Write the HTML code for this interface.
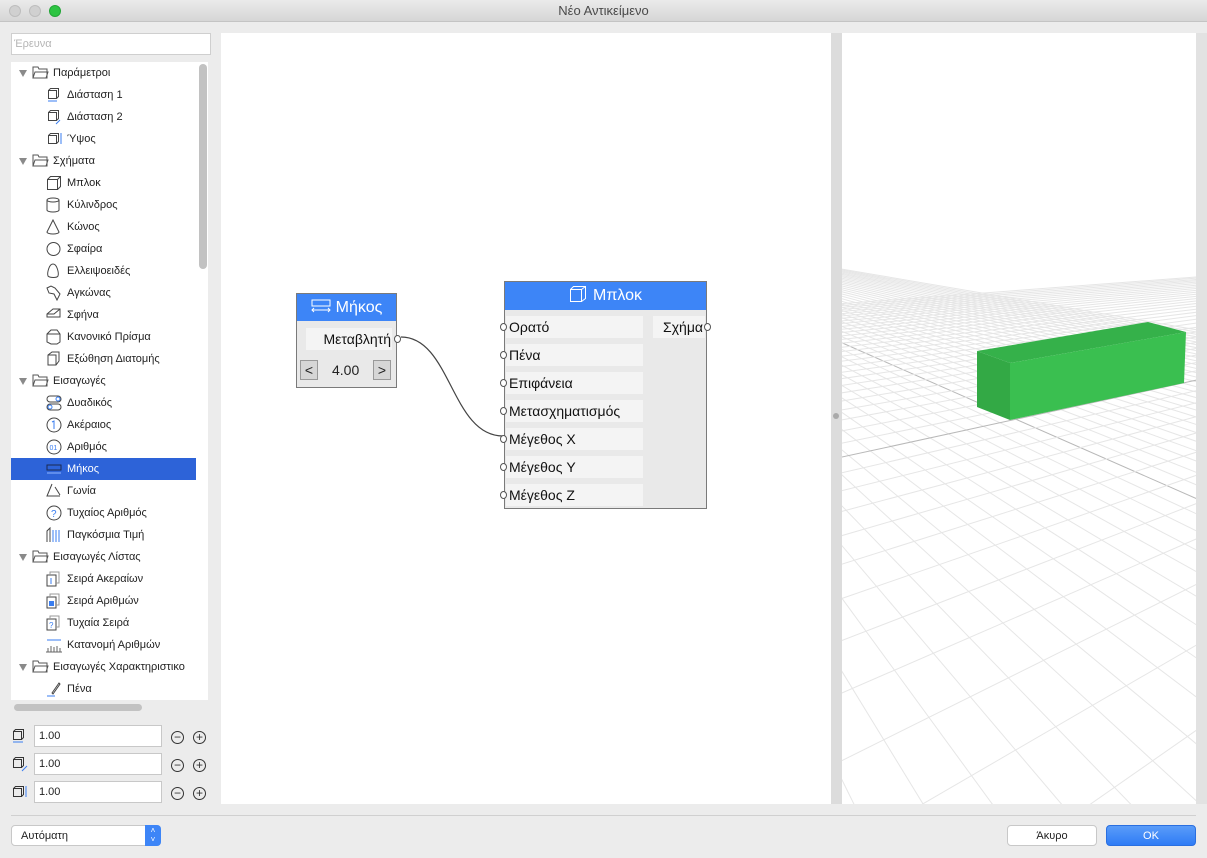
<!DOCTYPE html>
<html style="overflow:hidden"><head><meta charset="utf-8">
<style>
*{box-sizing:border-box;margin:0;padding:0}
body{width:1207px;height:858px;overflow:hidden;background:#ececec;font-family:"Liberation Sans","DejaVu Sans",sans-serif;position:relative;color:#222}
.abs{position:absolute}
#title{left:0;top:0;width:1207px;height:22px;background:linear-gradient(#ebebeb,#d6d6d6);border-bottom:1px solid #c4c4c4;text-align:center;font-size:13px;line-height:22px;color:#4a4a4a}
.dot{width:12px;height:12px;border-radius:50%;top:5px;background:#d0d0d0;border:1px solid #bdbdbd}
#search{left:11px;top:33px;width:200px;height:22px;background:#fff;border:1px solid #cfcfcf;font-size:11px;color:#b5b5b5;padding:4px 2px}
#tree{left:11px;top:62px;width:197px;height:638px;background:#fff;overflow:hidden}
.row{position:absolute;left:0;width:185px;height:22px;font-size:11px;line-height:22px;white-space:nowrap}
.row.l0 span{position:absolute;left:42px}
.row.l1 span{position:absolute;left:56px}
.row svg{position:absolute;top:3px}
.row.sel{background:#2d63d8;color:#fff}
.tri{position:absolute;left:8px;top:8px;width:0;height:0;border-left:4px solid transparent;border-right:4px solid transparent;border-top:7px solid #8a8a8a}
#vs{left:199px;top:64px;width:8px;height:205px;background:#c2c2c2;border-radius:4px}
#hs{left:14px;top:704px;width:128px;height:7px;background:#c2c2c2;border-radius:4px}
.inp{left:34px;width:128px;height:22px;background:#fff;border:1px solid #c8c8c8;font-size:11px;line-height:20px;padding-left:4px}
.pm{width:13px;height:13px;border:1px solid #333;border-radius:50%;font-size:12px;line-height:10px;text-align:center;color:#333}
#canvas{left:221px;top:33px;width:610px;height:771px;background:#fff;overflow:hidden}
#split{left:831px;top:33px;width:11px;height:771px;background:#dcdcdc}
#view{left:842px;top:33px;width:354px;height:771px;background:#fff;overflow:hidden}
.node{position:absolute;background:#e9e9e9;border:1px solid #7a7a7a}
.hdr{background:#3d85f7;color:#fff;font-size:16px;text-align:center}
.port{position:absolute;background:#f4f4f4;font-size:14px;height:22px;line-height:22px;color:#111}
.pin{position:absolute;width:7px;height:8px;border:1px solid #555;border-radius:50%;background:#fff}
.btn{height:21px;border-radius:4px;font-size:11px;text-align:center;line-height:20px}
</style></head><body>
<div id="title" class="abs">Νέο Αντικείμενο</div>
<div class="abs dot" style="left:9px"></div>
<div class="abs dot" style="left:29px"></div>
<div class="abs dot" style="left:49px;background:#2dc442;border-color:#22a636"></div>
<div id="search" class="abs">Έρευνα</div>
<div id="tree" class="abs">
<div class="row l0" style="top:0"><i class="tri"></i><svg width="17" height="14" style="left:21px"><path d="M1 2h5l1 2h8v9H1z M3 7h13l-2 6H1z" fill="none" stroke="#555"/></svg><span>Παράμετροι</span></div>
<div class="row l1" style="top:22px"><svg width="14" height="16" style="left:36px"><rect x="1.5" y="3.5" width="8" height="8" fill="none" stroke="#444"/><path d="M1.5 3.5l2-2h8v8l-2 2" fill="none" stroke="#444"/><path d="M1 14h9" stroke="#3a7ef0"/></svg><span>Διάσταση 1</span></div>
<div class="row l1" style="top:44px"><svg width="14" height="16" style="left:36px"><rect x="1.5" y="3.5" width="8" height="8" fill="none" stroke="#444"/><path d="M1.5 3.5l2-2h8v8l-2 2" fill="none" stroke="#444"/><path d="M9 15l4-4" stroke="#3a7ef0"/></svg><span>Διάσταση 2</span></div>
<div class="row l1" style="top:66px"><svg width="16" height="16" style="left:36px"><rect x="1.5" y="4.5" width="8" height="8" fill="none" stroke="#444"/><path d="M1.5 4.5l2-2h8v8l-2 2" fill="none" stroke="#444"/><path d="M14 2v11" stroke="#3a7ef0"/></svg><span>Ύψος</span></div>
<div class="row l0" style="top:88px"><i class="tri"></i><svg width="17" height="14" style="left:21px"><path d="M1 2h5l1 2h8v9H1z M3 7h13l-2 6H1z" fill="none" stroke="#555"/></svg><span>Σχήματα</span></div>
<div class="row l1" style="top:110px"><svg width="16" height="16" style="left:35px"><rect x="1.5" y="4.5" width="10" height="10" fill="none" stroke="#444"/><path d="M1.5 4.5l3-3h10v10l-3 3M11.5 4.5l3-3" fill="none" stroke="#444"/></svg><span>Μπλοκ</span></div>
<div class="row l1" style="top:132px"><svg width="16" height="16" style="left:35px"><ellipse cx="7" cy="3" rx="6" ry="2" fill="none" stroke="#444"/><path d="M1 3v10a6 2 0 0 0 12 0V3" fill="none" stroke="#444"/></svg><span>Κύλινδρος</span></div>
<div class="row l1" style="top:154px"><svg width="16" height="16" style="left:35px"><path d="M7 1L1 13a6 2 0 0 0 12 0z" fill="none" stroke="#444"/></svg><span>Κώνος</span></div>
<div class="row l1" style="top:176px"><svg width="16" height="16" style="left:35px"><circle cx="7.5" cy="8" r="6.5" fill="none" stroke="#444"/></svg><span>Σφαίρα</span></div>
<div class="row l1" style="top:198px"><svg width="16" height="16" style="left:35px"><path d="M7 1C3 1 1 10 2 13c2 2 9 2 10 0 1-3-1-12-5-12z" fill="none" stroke="#444"/></svg><span>Ελλειψοειδές</span></div>
<div class="row l1" style="top:220px"><svg width="16" height="16" style="left:35px"><path d="M1 3l4-2 4 2 5 6-3 6-3-6-5-1z" fill="none" stroke="#444"/></svg><span>Αγκώνας</span></div>
<div class="row l1" style="top:242px"><svg width="16" height="16" style="left:35px"><path d="M1 7l6-5h7v8H1zM1 7h7l6-5" fill="none" stroke="#444"/></svg><span>Σφήνα</span></div>
<div class="row l1" style="top:264px"><svg width="16" height="16" style="left:35px"><path d="M1 5l4-4h6l3 4v8l-3 2H5l-4-2z M1 5h13" fill="none" stroke="#444"/></svg><span>Κανονικό Πρίσμα</span></div>
<div class="row l1" style="top:286px"><svg width="16" height="16" style="left:35px"><path d="M2 4l4-3h7v9l-3 4H2zM2 4h8v10" fill="none" stroke="#444"/></svg><span>Εξώθηση Διατομής</span></div>
<div class="row l0" style="top:308px"><i class="tri"></i><svg width="17" height="14" style="left:21px"><path d="M1 2h5l1 2h8v9H1z M3 7h13l-2 6H1z" fill="none" stroke="#555"/></svg><span>Εισαγωγές</span></div>
<div class="row l1" style="top:330px"><svg width="16" height="16" style="left:35px"><rect x="1" y="1" width="14" height="6" rx="3" fill="none" stroke="#444"/><rect x="1" y="9" width="14" height="6" rx="3" fill="none" stroke="#444"/><circle cx="12" cy="4" r="2" fill="none" stroke="#3a7ef0"/><circle cx="4" cy="12" r="2" fill="none" stroke="#3a7ef0"/></svg><span>Δυαδικός</span></div>
<div class="row l1" style="top:352px"><svg width="16" height="16" style="left:35px"><circle cx="8" cy="8" r="7" fill="none" stroke="#444"/><path d="M6 5l2-1v8" fill="none" stroke="#3a7ef0"/></svg><span>Ακέραιος</span></div>
<div class="row l1" style="top:374px"><svg width="16" height="16" style="left:35px"><circle cx="8" cy="8" r="7" fill="none" stroke="#444"/><text x="3.5" y="11" font-size="7" fill="#3a7ef0" font-family="Liberation Sans">01</text></svg><span>Αριθμός</span></div>
<div class="row l1 sel" style="top:396px;width:185px"><svg width="16" height="16" style="left:35px"><rect x="1" y="4" width="14" height="5" fill="none" stroke="#1a2a50"/><path d="M1 12h14" stroke="#8fb6ff"/></svg><span>Μήκος</span></div>
<div class="row l1" style="top:418px"><svg width="16" height="16" style="left:35px"><path d="M6 1L1 13h13M9 4l5 8" fill="none" stroke="#444"/></svg><span>Γωνία</span></div>
<div class="row l1" style="top:440px"><svg width="16" height="16" style="left:35px"><circle cx="8" cy="8" r="7" fill="none" stroke="#444"/><text x="5" y="12" font-size="10" fill="#3a7ef0" font-family="Liberation Sans">?</text></svg><span>Τυχαίος Αριθμός</span></div>
<div class="row l1" style="top:462px"><svg width="16" height="16" style="left:35px"><path d="M7 3v12M10 3v12M13 3v12" fill="none" stroke="#3a7ef0"/><path d="M1 15V4l3-3v14" fill="none" stroke="#444"/></svg><span>Παγκόσμια Τιμή</span></div>
<div class="row l0" style="top:484px"><i class="tri"></i><svg width="17" height="14" style="left:21px"><path d="M1 2h5l1 2h8v9H1z M3 7h13l-2 6H1z" fill="none" stroke="#555"/></svg><span>Εισαγωγές Λίστας</span></div>
<div class="row l1" style="top:506px"><svg width="16" height="16" style="left:35px"><rect x="1" y="4" width="9" height="11" fill="none" stroke="#444"/><path d="M4 4V1h9v11h-3" fill="none" stroke="#999"/><path d="M5 7v6" stroke="#3a7ef0"/></svg><span>Σειρά Ακεραίων</span></div>
<div class="row l1" style="top:528px"><svg width="16" height="16" style="left:35px"><rect x="1" y="4" width="9" height="11" fill="none" stroke="#444"/><path d="M4 4V1h9v11h-3" fill="none" stroke="#999"/><rect x="3" y="8" width="5" height="5" fill="#3a7ef0"/></svg><span>Σειρά Αριθμών</span></div>
<div class="row l1" style="top:550px"><svg width="16" height="16" style="left:35px"><rect x="1" y="4" width="9" height="11" fill="none" stroke="#444"/><path d="M4 4V1h9v11h-3" fill="none" stroke="#999"/><text x="3" y="13" font-size="8" fill="#3a7ef0">?</text></svg><span>Τυχαία Σειρά</span></div>
<div class="row l1" style="top:572px"><svg width="18" height="16" style="left:34px"><path d="M2 3h14" stroke="#3a7ef0"/><path d="M1 15h16M3 15v-4M6 15v-6M9 15v-5M12 15v-6M15 15v-4" stroke="#666"/></svg><span>Κατανομή Αριθμών</span></div>
<div class="row l0" style="top:594px;width:190px"><i class="tri"></i><svg width="17" height="14" style="left:21px"><path d="M1 2h5l1 2h8v9H1z M3 7h13l-2 6H1z" fill="none" stroke="#555"/></svg><span>Εισαγωγές Χαρακτηριστικο</span></div>
<div class="row l1" style="top:616px"><svg width="16" height="16" style="left:35px"><path d="M6 12L13 2l1 1-7 10z" fill="none" stroke="#444"/><path d="M1 15h8" stroke="#3a7ef0"/></svg><span>Πένα</span></div>
</div>
<div id="vs" class="abs"></div>
<div id="hs" class="abs"></div>

<svg class="abs" style="left:12px;top:728px" width="16" height="16"><rect x="1.5" y="3.5" width="8" height="8" fill="none" stroke="#333"/><path d="M1.5 3.5l2-2h8v8l-2 2" fill="none" stroke="#333"/><path d="M1 14h10" stroke="#3a7ef0"/></svg>
<div class="abs inp" style="top:725px">1.00</div>
<div class="abs pm" style="left:171px;top:731px">−</div><div class="abs pm" style="left:193px;top:731px">+</div>
<svg class="abs" style="left:12px;top:756px" width="16" height="16"><rect x="1.5" y="3.5" width="8" height="8" fill="none" stroke="#333"/><path d="M1.5 3.5l2-2h8v8l-2 2" fill="none" stroke="#333"/><path d="M10 15l5-5" stroke="#3a7ef0"/></svg>
<div class="abs inp" style="top:753px">1.00</div>
<div class="abs pm" style="left:171px;top:759px">−</div><div class="abs pm" style="left:193px;top:759px">+</div>
<svg class="abs" style="left:12px;top:784px" width="16" height="16"><rect x="1.5" y="4.5" width="8" height="8" fill="none" stroke="#333"/><path d="M1.5 4.5l2-2h8v8l-2 2" fill="none" stroke="#333"/><path d="M14 2v11" stroke="#3a7ef0"/></svg>
<div class="abs inp" style="top:781px">1.00</div>
<div class="abs pm" style="left:171px;top:787px">−</div><div class="abs pm" style="left:193px;top:787px">+</div>

<div id="canvas" class="abs">
<svg class="abs" style="left:0;top:0" width="610" height="771"><path d="M180 304C230 304 230 403 282 403" fill="none" stroke="#444" stroke-width="1.2"/></svg>
<div class="node" style="left:75px;top:260px;width:101px;height:95px">
<div class="hdr" style="height:27px;line-height:27px"><svg width="20" height="14" style="vertical-align:-1px;margin-right:5px"><rect x="1" y="1" width="18" height="6" fill="none" stroke="#fff"/><path d="M1 11h18M3 9l-2 2 2 2M17 9l2 2-2 2" fill="none" stroke="#fff"/></svg>Μήκος</div>
<div class="port" style="left:9px;top:34px;width:86px;text-align:right;padding-right:1px">Μεταβλητή</div>
<div class="pin" style="left:97px;top:41px"></div>
<div class="abs" style="left:3px;top:66px;width:18px;height:20px;background:#d6d6d6;border:1px solid #999;font-size:14px;text-align:center;line-height:18px">&lt;</div>
<div class="abs" style="left:35px;top:67px;font-size:14px;line-height:18px">4.00</div>
<div class="abs" style="left:76px;top:66px;width:18px;height:20px;background:#d6d6d6;border:1px solid #999;font-size:14px;text-align:center;line-height:18px">&gt;</div>
</div>
<div class="node" style="left:283px;top:248px;width:203px;height:228px">
<div class="hdr" style="height:28px;line-height:28px"><svg width="18" height="18" style="vertical-align:-3px;margin-right:6px"><rect x="1.5" y="4.5" width="11" height="12" fill="none" stroke="#fff"/><path d="M1.5 4.5l3-3h12v12l-4 3M12.5 4.5l4-3" fill="none" stroke="#fff"/></svg>Μπλοκ</div>
<div class="port" style="left:1px;top:34px;width:137px;padding-left:3px">Ορατό</div>
<div class="port" style="left:1px;top:62px;width:137px;padding-left:3px">Πένα</div>
<div class="port" style="left:1px;top:90px;width:137px;padding-left:3px">Επιφάνεια</div>
<div class="port" style="left:1px;top:118px;width:137px;padding-left:3px">Μετασχηματισμός</div>
<div class="port" style="left:1px;top:146px;width:137px;padding-left:3px">Μέγεθος X</div>
<div class="port" style="left:1px;top:174px;width:137px;padding-left:3px">Μέγεθος Y</div>
<div class="port" style="left:1px;top:202px;width:137px;padding-left:3px">Μέγεθος Z</div>
<div class="port" style="left:148px;top:34px;width:52px;text-align:right;padding-right:2px">Σχήμα</div>
<div class="pin" style="left:-5px;top:41px"></div><div class="pin" style="left:-5px;top:69px"></div><div class="pin" style="left:-5px;top:97px"></div><div class="pin" style="left:-5px;top:125px"></div><div class="pin" style="left:-5px;top:153px"></div><div class="pin" style="left:-5px;top:181px"></div><div class="pin" style="left:-5px;top:209px"></div>
<div class="pin" style="left:199px;top:41px"></div>
</div>
</div>
<div id="split" class="abs"><div class="abs" style="left:2px;top:380px;width:6px;height:6px;border-radius:50%;background:#aaa"></div></div>
<div id="view" class="abs"><svg id="grid" width="354" height="771"></svg></div>
<div class="abs" style="left:1196px;top:33px;width:11px;height:771px;background:#e2e2e2"></div>

<div class="abs" style="left:11px;top:815px;width:1185px;height:1px;background:#d0d0d0"></div>
<div class="abs btn" style="left:11px;top:825px;width:150px;background:#fff;border:1px solid #c8c8c8;text-align:left;padding-left:9px">Αυτόματη</div>
<div class="abs" style="left:145px;top:825px;width:16px;height:21px;background:#3d85f7;border-radius:0 4px 4px 0;color:#fff;font-size:8px;line-height:9px;text-align:center;padding-top:1px">˄<br>˅</div>
<div class="abs btn" style="left:1007px;top:825px;width:90px;background:#fff;border:1px solid #c8c8c8">Άκυρο</div>
<div class="abs btn" style="left:1106px;top:825px;width:90px;background:linear-gradient(#5a9cf8,#2f7cf6);color:#fff;border:1px solid #2a6fe0">OK</div>
<script>
(function(){
var s=document.getElementById('grid'),out='';
var ox=842,oy=33;
function ln(x1,y1,x2,y2,c){out+='<line x1="'+(x1-ox)+'" y1="'+(y1-oy)+'" x2="'+(x2-ox)+'" y2="'+(y2-oy)+'" stroke="'+c+'" stroke-width="1"/>';}
var hy=222,v1x=567,v2x=1925,by=1400,top=228;
var a1=567+(1400-222)*(355/156);
for(var k=-30;k<=30;k++){var bx=a1+k*140;var t=(top-hy)/(by-hy);ln(v1x+(bx-v1x)*t,top,bx,by,k==0?'#b8b8b8':'#e6e6e6');}
var a2=1925+(1400-222)*((842-1925)/235);
for(var k=-30;k<=30;k++){var bx=a2+k*340;var t=(top-hy)/(by-hy);ln(v2x+(bx-v2x)*t,top,bx,by,k==0?'#b8b8b8':'#e6e6e6');}
out+='<polygon points="'+[[977,351],[1148,322],[1186,332],[1010,363]].map(p=>(p[0]-ox)+','+(p[1]-oy)).join(' ')+'" fill="#35b14a"/>';
out+='<polygon points="'+[[977,351],[1010,363],[1010,420],[977,407]].map(p=>(p[0]-ox)+','+(p[1]-oy)).join(' ')+'" fill="#33a945"/>';
out+='<polygon points="'+[[1010,363],[1186,332],[1184,383],[1010,420]].map(p=>(p[0]-ox)+','+(p[1]-oy)).join(' ')+'" fill="#3abf50"/>';
s.innerHTML=out;
})();
</script>
</body></html>
